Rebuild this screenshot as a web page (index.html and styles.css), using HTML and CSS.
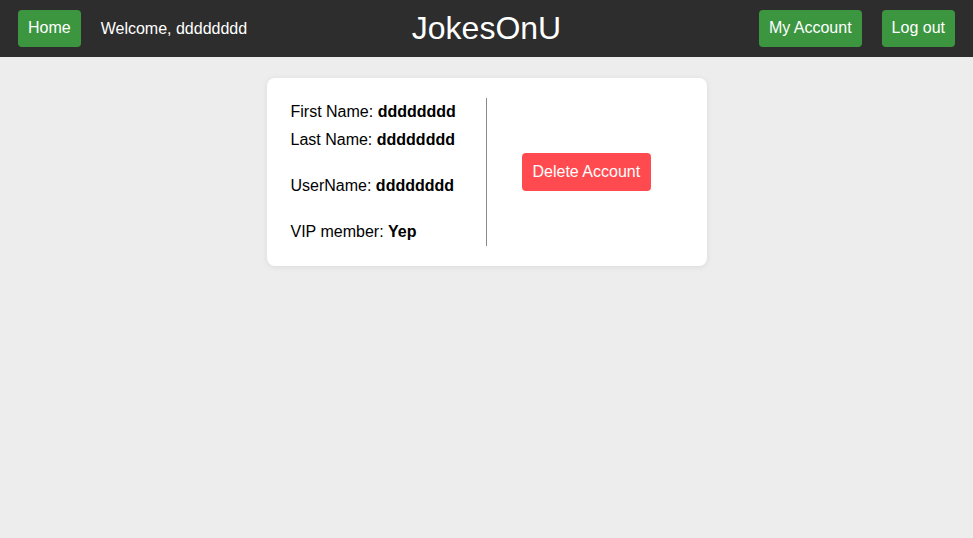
FILE: index.html
```html
<!DOCTYPE html>
<html>
<head>
<meta charset="utf-8">
<link rel="stylesheet" href="styles.css">
</head>
<body>
<header class="topbar">
  <div class="left">
    <button class="btn green">Home</button>
    <span class="welcome">Welcome, dddddddd</span>
  </div>
  <div class="title">JokesOnU</div>
  <div class="right">
    <button class="btn green">My Account</button>
    <button class="btn green">Log out</button>
  </div>
</header>
<main class="main">
  <section class="card">
    <div class="info">
      <p class="line">First Name: <b>dddddddd</b></p>
      <p class="line l2">Last Name: <b>dddddddd</b></p>
      <p class="line l3">UserName: <b>dddddddd</b></p>
      <p class="line l3">VIP member: <b>Yep</b></p>
    </div>
    <div class="actions">
      <button class="btn red wide">Delete Account</button>
    </div>
  </section>
</main>
</body>
</html>
```
FILE: styles.css
```css
* { box-sizing: border-box; }
html, body { margin: 0; padding: 0; }
body {
  background: #ededed;
  font-family: "Liberation Sans", Arial, sans-serif;
  font-size: 16px;
  color: #000;
  min-height: 538px;
}
.topbar {
  height: 57px;
  background: #2d2d2d;
  display: grid;
  grid-template-columns: 1fr auto 1fr;
  align-items: center;
  padding: 0 18px;
}
.left { display: flex; align-items: center; gap: 20px; }
.right { display: flex; justify-content: flex-end; gap: 20px; }
.welcome { color: #fff; font-size: 16px; }
.title { color: #fff; font-size: 32px; line-height: 37px; }
.btn {
  font-family: "Liberation Sans", Arial, sans-serif;
  font-size: 16px;
  line-height: 18px;
  padding: 9px 10px 10px;
  border: none;
  border-radius: 4px;
  color: #fff;
  cursor: pointer;
}
.wide { padding: 10px 11px; }
.green { background: #3c963f; }
.red { background: #ff4b4f; }
.main { display: flex; justify-content: center; padding-top: 21px; }
.card {
  width: 440px;
  height: 188px;
  background: #fff;
  border-radius: 8px;
  box-shadow: 0 1px 6px rgba(0,0,0,0.08);
  padding: 20px 0 20px 24px;
  display: flex;
}
.info {
  width: 196px;
  border-right: 1px solid #8a8a8a;
  padding-top: 5px;
}
.line { margin: 0; line-height: 18px; }
.l2 { margin-top: 10px; }
.l3 { margin-top: 28px; }
.actions {
  display: flex;
  align-items: center;
  padding-left: 35px;
}
```
